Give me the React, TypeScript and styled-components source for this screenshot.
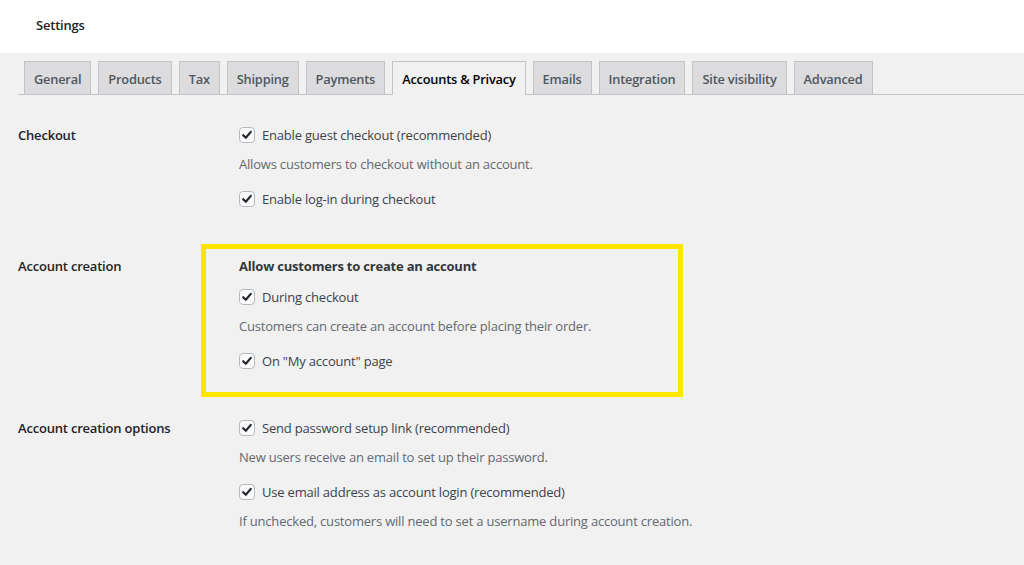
import React from 'react';
import styled, { createGlobalStyle } from 'styled-components';

const GlobalStyle = createGlobalStyle`
  html, body {
    margin: 0;
    padding: 0;
    background: #f1f1f1;
    font-family: "Open Sans", "Noto Sans", sans-serif;
    font-size: 13px;
    letter-spacing: -0.2px;
    color: #3c434a;
  }
`;

const tabs = [
  'General',
  'Products',
  'Tax',
  'Shipping',
  'Payments',
  'Accounts & Privacy',
  'Emails',
  'Integration',
  'Site visibility',
  'Advanced',
];

interface checkboxProps {
  label: string;
}

const Checkbox = ({ label }: checkboxProps) => (
  <CheckRow>
    <Box>
      <svg width="12" height="12" viewBox="0 0 12 12">
        <path
          d="M2.2 6.2 L4.8 8.8 L9.8 2.9"
          fill="none"
          stroke="#23282d"
          strokeWidth="2.2"
          strokeLinecap="round"
          strokeLinejoin="round"
        />
      </svg>
    </Box>
    <span>{label}</span>
  </CheckRow>
);

const App = () => {
  return (
    <Page>
      <GlobalStyle />
      <Header>Settings</Header>
      <TabBar>
        {tabs.map((t) => (
          <Tab key={t} active={t === 'Accounts & Privacy'}>
            {t}
          </Tab>
        ))}
      </TabBar>
      <Form>
        <Section>
          <RowLabel>Checkout</RowLabel>
          <Field>
            <Checkbox label="Enable guest checkout (recommended)" />
            <Description>Allows customers to checkout without an account.</Description>
            <Checkbox label="Enable log-in during checkout" />
          </Field>
        </Section>
        <Section>
          <RowLabel>Account creation</RowLabel>
          <Highlight>
            <FieldTitle>Allow customers to create an account</FieldTitle>
            <Checkbox label="During checkout" />
            <Description>Customers can create an account before placing their order.</Description>
            <Checkbox label={'On "My account" page'} />
          </Highlight>
        </Section>
        <Section>
          <RowLabel>Account creation options</RowLabel>
          <Field>
            <Checkbox label="Send password setup link (recommended)" />
            <Description>New users receive an email to set up their password.</Description>
            <Checkbox label="Use email address as account login (recommended)" />
            <Description>
              If unchecked, customers will need to set a username during account creation.
            </Description>
          </Field>
        </Section>
      </Form>
    </Page>
  );
};

const Page = styled.div`
  min-height: 565px;
  background: #f1f1f1;
`;

const Header = styled.div`
  height: 53px;
  background: #fff;
  display: flex;
  align-items: center;
  padding: 0 0 4px 36px;
  font-size: 13px;
  font-weight: 600;
  color: #1d2327;
  box-sizing: border-box;
`;

const TabBar = styled.nav`
  display: flex;
  gap: 7px;
  margin-left: 18px;
  padding: 8px 0 0 6px;
  border-bottom: 1px solid #c3c4c7;
`;

const Tab = styled.div<{ active: boolean }>`
  padding: 6px 9px 4px;
  line-height: 22px;
  font-size: 12.8px;
  font-weight: 600;
  border: 1px solid #c3c4c7;
  border-bottom: none;
  color: ${({ active }) => (active ? '#000' : '#50575e')};
  background: ${({ active }) => (active ? '#f1f1f1' : '#dcdcde')};
  margin-bottom: ${({ active }) => (active ? '-1px' : '0')};
  padding-bottom: ${({ active }) => (active ? '5px' : '4px')};
  white-space: nowrap;
`;

const Form = styled.div`
  display: flex;
  flex-direction: column;
  gap: 47px;
  padding: 30px 0 0 18px;
`;

const Section = styled.div`
  display: grid;
  grid-template-columns: 221px 1fr;
`;

const RowLabel = styled.div`
  line-height: 20px;
  font-size: 13px;
  font-weight: 600;
  color: #1d2327;
`;

const Field = styled.div`
  display: flex;
  flex-direction: column;
`;

const Highlight = styled.div`
  display: flex;
  flex-direction: column;
  box-sizing: border-box;
  width: 482px;
  border: 5px solid #ffe500;
  padding: 7px 0 21px 33px;
  margin: -12px 0 -26px -38px;
`;

const FieldTitle = styled.strong`
  display: block;
  line-height: 20px;
  font-weight: 700;
  color: #32373c;
  margin-bottom: 11px;
`;

const CheckRow = styled.label`
  display: flex;
  align-items: center;
  gap: 7px;
  line-height: 20px;
  color: #3c434a;

  & + div {
    margin-top: 9px;
  }
  div + & {
    margin-top: 15px;
  }
`;

const Box = styled.span`
  display: flex;
  align-items: center;
  justify-content: center;
  width: 16px;
  height: 16px;
  box-sizing: border-box;
  border: 1px solid #b4b9be;
  border-radius: 4px;
  background: #fbfbfb;
`;

const Description = styled.div`
  line-height: 20px;
  color: #646970;
`;

export default App;
